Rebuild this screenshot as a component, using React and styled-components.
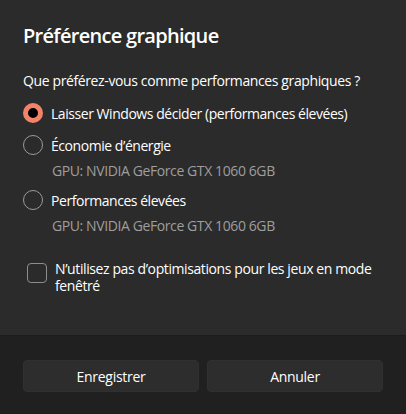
import React, {useState} from 'react';
import styled, {createGlobalStyle} from 'styled-components';

const GlobalStyle = createGlobalStyle`
html, body {
    margin: 0;
    padding: 0;
    background: #202020;
}
body {
    font-family: "Segoe UI", "Open Sans", "Noto Sans", sans-serif;
    color: #ffffff;
    -webkit-font-smoothing: antialiased;
}
`;

const Dialog = styled.div`
width: 406px;
height: 414px;
display: flex;
flex-direction: column;
`;

const Body = styled.div`
flex: 1;
background-color: #2b2b2b;
padding: 22px 23px 0 23px;
display: flex;
flex-direction: column;
`;

const Title = styled.h1`
margin: 0;
font-size: 20px;
font-weight: 600;
line-height: 28px;
letter-spacing: -0.7px;
`;

const Prompt = styled.div`
margin-top: 21px;
font-size: 14px;
line-height: 20px;
letter-spacing: -0.38px;
`;

const Options = styled.div`
margin-top: 6px;
display: flex;
flex-direction: column;
`;

const Option = styled.label`
display: flex;
align-items: center;
gap: 8px;
height: 32px;
font-size: 14px;
letter-spacing: -0.45px;
cursor: pointer;
`;

const Radio = styled.span`
box-sizing: border-box;
width: 20px;
height: 20px;
border-radius: 50%;
flex-shrink: 0;
border: ${props => props.checked ? '5px solid #f0836a' : '1px solid #9a9a9a'};
background-color: ${props => props.checked ? '#000000' : 'transparent'};
`;

const Hint = styled.div`
padding-left: 29px;
font-size: 14px;
line-height: 20px;
letter-spacing: -0.4px;
color: #9e9e9e;
margin-bottom: 3px;
`;

const CheckRow = styled.label`
margin-top: 21px;
padding-left: 4px;
display: flex;
align-items: flex-start;
gap: 8px;
font-size: 14px;
line-height: 17px;
letter-spacing: -0.4px;
cursor: pointer;
`;

const Box = styled.span`
box-sizing: border-box;
margin-top: 3px;
width: 20px;
height: 20px;
flex-shrink: 0;
border: 1px solid #8d8d8d;
border-radius: 4px;
`;

const Footer = styled.div`
background-color: #202020;
border-top: 1px solid #1c1c1c;
padding: 24px 23px 22px 23px;
display: grid;
grid-template-columns: 1fr 1fr;
gap: 8px;
`;

const Button = styled.button`
height: 32px;
border: 1px solid #303030;
border-radius: 4px;
background-color: #2d2d2d;
color: #ffffff;
font-family: inherit;
font-size: 14px;
letter-spacing: -0.3px;
cursor: pointer;
`;

const options = [
    {id: 'auto', label: 'Laisser Windows décider (performances élevées)'},
    {id: 'eco', label: 'Économie d’énergie', gpu: 'GPU: NVIDIA GeForce GTX 1060 6GB'},
    {id: 'perf', label: 'Performances élevées', gpu: 'GPU: NVIDIA GeForce GTX 1060 6GB'},
];

const App = () => {
    const [choice, setChoice] = useState('auto');

    return <Dialog>
        <GlobalStyle />
        <Body>
            <Title>Préférence graphique</Title>
            <Prompt>Que préférez-vous comme performances graphiques ?</Prompt>
            <Options>
                {options.map(o => <React.Fragment key={o.id}>
                    <Option onClick={() => setChoice(o.id)}>
                        <Radio checked={choice === o.id} />
                        {o.label}
                    </Option>
                    {o.gpu ? <Hint>{o.gpu}</Hint> : null}
                </React.Fragment>)}
            </Options>
            <CheckRow>
                <Box />
                <span>N’utilisez pas d’optimisations pour les jeux en mode fenêtré</span>
            </CheckRow>
        </Body>
        <Footer>
            <Button>Enregistrer</Button>
            <Button>Annuler</Button>
        </Footer>
    </Dialog>
}

export default App;
